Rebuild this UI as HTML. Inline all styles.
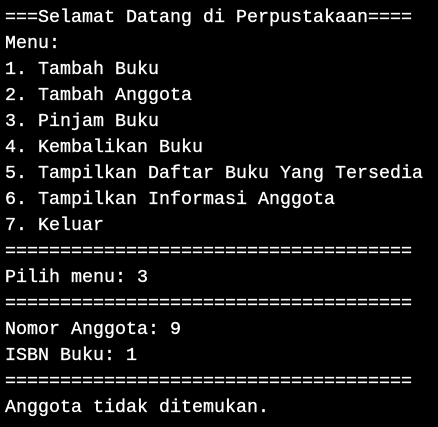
<!DOCTYPE html>
<html><head><meta charset="utf-8"><style>
html,body{margin:0;padding:0;background:#000;width:438px;height:427px;overflow:hidden}
pre{margin:0;position:absolute;left:5px;top:5px;color:#fff;font-family:"Liberation Mono",monospace;font-size:18.33px;line-height:26px;white-space:pre;-webkit-text-stroke:0.3px #fff}
</style></head><body><pre>===Selamat Datang di Perpustakaan====
Menu:
1. Tambah Buku
2. Tambah Anggota
3. Pinjam Buku
4. Kembalikan Buku
5. Tampilkan Daftar Buku Yang Tersedia
6. Tampilkan Informasi Anggota
7. Keluar
=====================================
Pilih menu: 3
=====================================
Nomor Anggota: 9
ISBN Buku: 1
=====================================
Anggota tidak ditemukan.</pre></body></html>
